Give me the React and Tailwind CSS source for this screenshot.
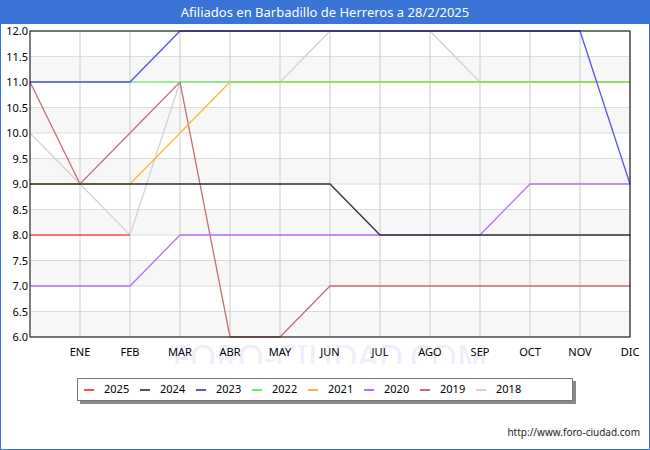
export default function App(){
const X=i=>30+50*i, Y=v=>6+(12-v)*51;
const series=[
["#d3d3d3",[10,9,8,11,11,11,12,12,12,11,11,11,11]],
["#c07070",[11,9,10,11,6,6,7,7,7,7,7,7,7]],
["#b870f0",[7,7,7,8,8,8,8,8,8,8,9,9,9]],
["#f8b848",[9,9,9,10,11,11,11,11,11,11,11,11,11]],
["#5cf25c",[11,11,11,11,11,11,11,11,11,11,11,11,11]],
["#5555ee",[11,11,11,12,12,12,12,12,12,12,12,12,9]],
["#333333",[9,9,9,9,9,9,9,8,8,8,8,8,8]],
["#f05050",[8,8,8]],
];
const months=["ENE","FEB","MAR","ABR","MAY","JUN","JUL","AGO","SEP","OCT","NOV","DIC"];
const legend=[["2025","#f05050"],["2024","#555"],["2023","#5555ee"],["2022","#5cf25c"],["2021","#f8b848"],["2020","#b870f0"],["2019","#c07070"],["2018","#d3d3d3"]];
const ticks=[];for(let v=6;v<=12.001;v+=0.5)ticks.push(v);
return <div className="w-[650px] h-[450px] border border-[#3a74d6] bg-white flex flex-col font-['DejaVu_Sans',sans-serif]">
<div className="h-[23px] bg-[#3a74d6] text-white text-[13px] flex items-center justify-center shrink-0">Afiliados en Barbadillo de Herreros a 28/2/2025</div>
<svg width="648" height="340" className="block shrink-0" viewBox="1 -1 648 340">
{[6,7,8,9,10,11].map(v=><rect key={v} x="30" y={Y(v+0.5)} width="600" height="25.5" fill="#f7f7f7"/>)}
{ticks.map(v=><line key={v} x1="30" x2="630" y1={Y(v)} y2={Y(v)} stroke="#dcdcdc"/>)}
{months.map((m,i)=><line key={m} x1={X(i+1)} x2={X(i+1)} y1="6" y2="312" stroke="#cccccc"/>)}
<text x="330" y="345" textAnchor="middle" fontSize="34" fill="#eeeef8">FORO-CIUDAD.COM</text>
{series.map(([c,d],k)=><polyline key={k} points={d.map((v,i)=>X(i)+","+Y(v)).join(" ")} fill="none" stroke={c} strokeWidth="1.3" opacity={k===4?0.75:1}/>)}
<rect x="30" y="6" width="600" height="306" fill="none" stroke="#000"/>
{ticks.map(v=><text key={v} x="28" y={Y(v)+4} textAnchor="end" fontSize="11" fill="#000">{v.toFixed(1)}</text>)}
{months.map((m,i)=><text key={m} x={X(i+1)} y="331" textAnchor="middle" fontSize="11">{m}</text>)}
</svg>
<div className="ml-[76px] mt-[14px] w-[496px] h-[23px] bg-white border border-[#777] shadow-[3px_3px_0_#888] flex items-center pl-[6px] gap-[12px] text-[11px]">
{legend.map(([t,c])=><div key={t} className="flex items-center gap-[10px] w-[44px] shrink-0"><span className="w-[10px] h-[2px] shrink-0" style={{background:c}}/>{t}</div>)}
</div>
<div className="mt-auto mb-[9px] mr-[9px] text-right text-[10px] text-[#222]">http://www.foro-ciudad.com</div>
</div>}
